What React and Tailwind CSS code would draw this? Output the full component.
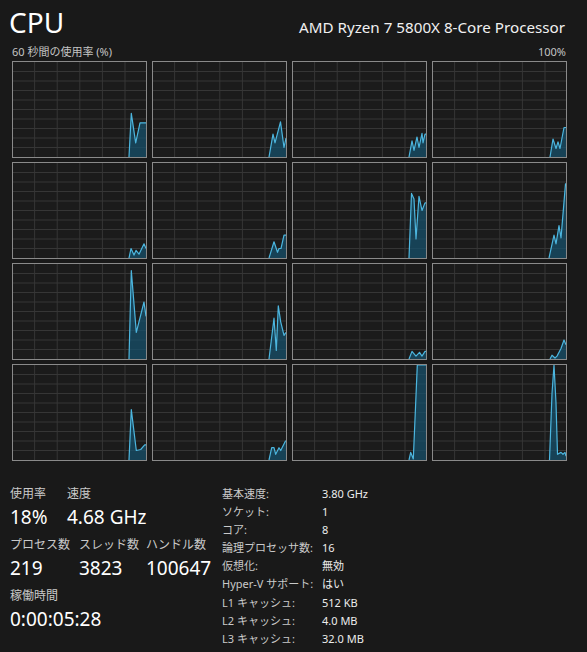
import React from "react";

const FONT = "font-['Noto_Sans','Noto_Sans_CJK_JP',sans-serif]";

// each core: [px from right edge, usage %]
const cores = [
  [[17, 0], [14.7, 46], [10.3, 15], [6, 36], [1, 36], [0, 36]],
  [[17, 0], [13, 24], [11, 15], [5.5, 37], [2, 10], [0, 20]],
  [[17, 0], [14, 17], [12, 7], [9, 21], [7, 10], [4, 25], [3, 15], [1, 24], [0, 24]],
  [[16, 0], [13, 19], [10, 9], [8, 16], [6, 9], [2, 31], [0, 31]],
  [[17, 0], [15, 10], [12, 3], [10, 8], [7, 4], [2, 15], [0, 10]],
  [[17, 0], [12, 17], [8.5, 6], [7, 10], [5, 10], [2, 24], [0, 24]],
  [[17, 0], [14.5, 68], [12, 62], [10, 20], [7, 65], [4, 50], [1, 58], [0, 58]],
  [[17, 0], [12, 24], [10, 15], [7, 34], [5, 21], [0.5, 78], [0, 78]],
  [[17, 0], [14.7, 93], [9.7, 28], [2, 60], [0, 45]],
  [[17, 0], [12, 43], [9.7, 9], [7.7, 56], [5.3, 39], [2, 25], [0, 28]],
  [[17, 0], [14, 8], [11.5, 5], [10, 3], [6.5, 7], [4, 3], [1, 8], [0, 8]],
  [[16, 0], [14, 4], [11, 1], [9, 3], [5, 11], [2, 20], [0, 15]],
  [[17, 0], [14.7, 53], [9.7, 10], [5.3, 11], [1.3, 16], [0, 16]],
  [[17, 0], [14.3, 13], [12, 13], [10.3, 6], [7, 13], [5.3, 10], [0.5, 20], [0, 20]],
  [[17, 0], [15.3, 8], [12.7, 1], [8.7, 100], [0, 100]],
  [[16.5, 0], [14, 70], [12, 100], [10, 60], [8.5, 6], [5, 8], [3, 6], [1, 8], [0, 4]],
];

const W = 133;
const H = 95;

function CoreGraph({ data }) {
  const pts = data.map(([dx, v]) => `${W - dx},${(H * (1 - v / 100)).toFixed(1)}`);
  const line = pts.join(" ");
  const area = `${W - data[0][0]},${H} ${line} ${W},${H}`;
  return (
    <div className="h-[97px] border border-[#8a8a8a] bg-[#1b1b1b]">
      <svg width={W} height={H} viewBox={`0 0 ${W} ${H}`} className="block">
        {[1, 2, 3, 4, 5].map((i) => (
          <line key={"v" + i} x1={i * 22.6 - 1} x2={i * 22.6 - 1} y1="0" y2={H} stroke="#363636" strokeWidth="1" />
        ))}
        {[1, 2, 3, 4, 5, 6, 7, 8, 9].map((i) => (
          <line key={"h" + i} x1="0" x2={W} y1={i * 9.5} y2={i * 9.5} stroke="#363636" strokeWidth="1" />
        ))}
        <polygon points={area} fill="#17506b" fillOpacity="0.75" />
        <polyline points={line} fill="none" stroke="#4cb6df" strokeWidth="1.2" strokeLinejoin="round" />
      </svg>
    </div>
  );
}

function Stat({ label, value, className }) {
  return (
    <div className={className}>
      <div className="text-[12px] leading-[18px] text-[#c9c9c9]">{label}</div>
      <div className="text-[19px] leading-[28px] text-white">{value}</div>
    </div>
  );
}

const details = [
  ["基本速度:", "3.80 GHz"],
  ["ソケット:", "1"],
  ["コア:", "8"],
  ["論理プロセッサ数:", "16"],
  ["仮想化:", "無効"],
  ["Hyper-V サポート:", "はい"],
  ["L1 キャッシュ:", "512 KB"],
  ["L2 キャッシュ:", "4.0 MB"],
  ["L3 キャッシュ:", "32.0 MB"],
];

export default function App() {
  return (
    <div className={`w-[587px] h-[652px] overflow-hidden bg-[#191919] text-white ${FONT}`}>
      <div className="flex items-baseline justify-between pt-[4px] pl-[9px] pr-[22px]">
        <h1 className="text-[28px] leading-[36px] text-white">CPU</h1>
        <div className="text-[15.2px] leading-[20px] text-[#f0f0f0]">AMD Ryzen 7 5800X 8-Core Processor</div>
      </div>
      <div className="mt-[5px] flex justify-between pl-[12px] pr-[21px] text-[11px] leading-[14px] text-[#c4c4c4]">
        <span>60 秒間の使用率 (%)</span>
        <span>100%</span>
      </div>
      <div className="mt-[2px] ml-[12px] grid w-[555px] grid-cols-4 gap-x-[5px] gap-y-[4px]">
        {cores.map((c, i) => (
          <CoreGraph key={i} data={c} />
        ))}
      </div>

      <div className="mt-[24px] flex">
        <div className="flex w-[222px] shrink-0 flex-col gap-[5px] pl-[10px]">
          <div className="flex">
            <Stat label="使用率" value="18%" className="w-[57px]" />
            <Stat label="速度" value="4.68 GHz" />
          </div>
          <div className="flex">
            <Stat label="プロセス数" value="219" className="w-[69px]" />
            <Stat label="スレッド数" value="3823" className="w-[67px]" />
            <Stat label="ハンドル数" value="100647" />
          </div>
          <Stat label="稼働時間" value="0:00:05:28" />
        </div>
        <div className="flex flex-col text-[11px] leading-[18.1px]">
          {details.map(([k, v]) => (
            <div key={k} className="flex">
              <span className="w-[100px] text-[#c9c9c9]">{k}</span>
              <span className="text-[#ececec]">{v}</span>
            </div>
          ))}
        </div>
      </div>
    </div>
  );
}
